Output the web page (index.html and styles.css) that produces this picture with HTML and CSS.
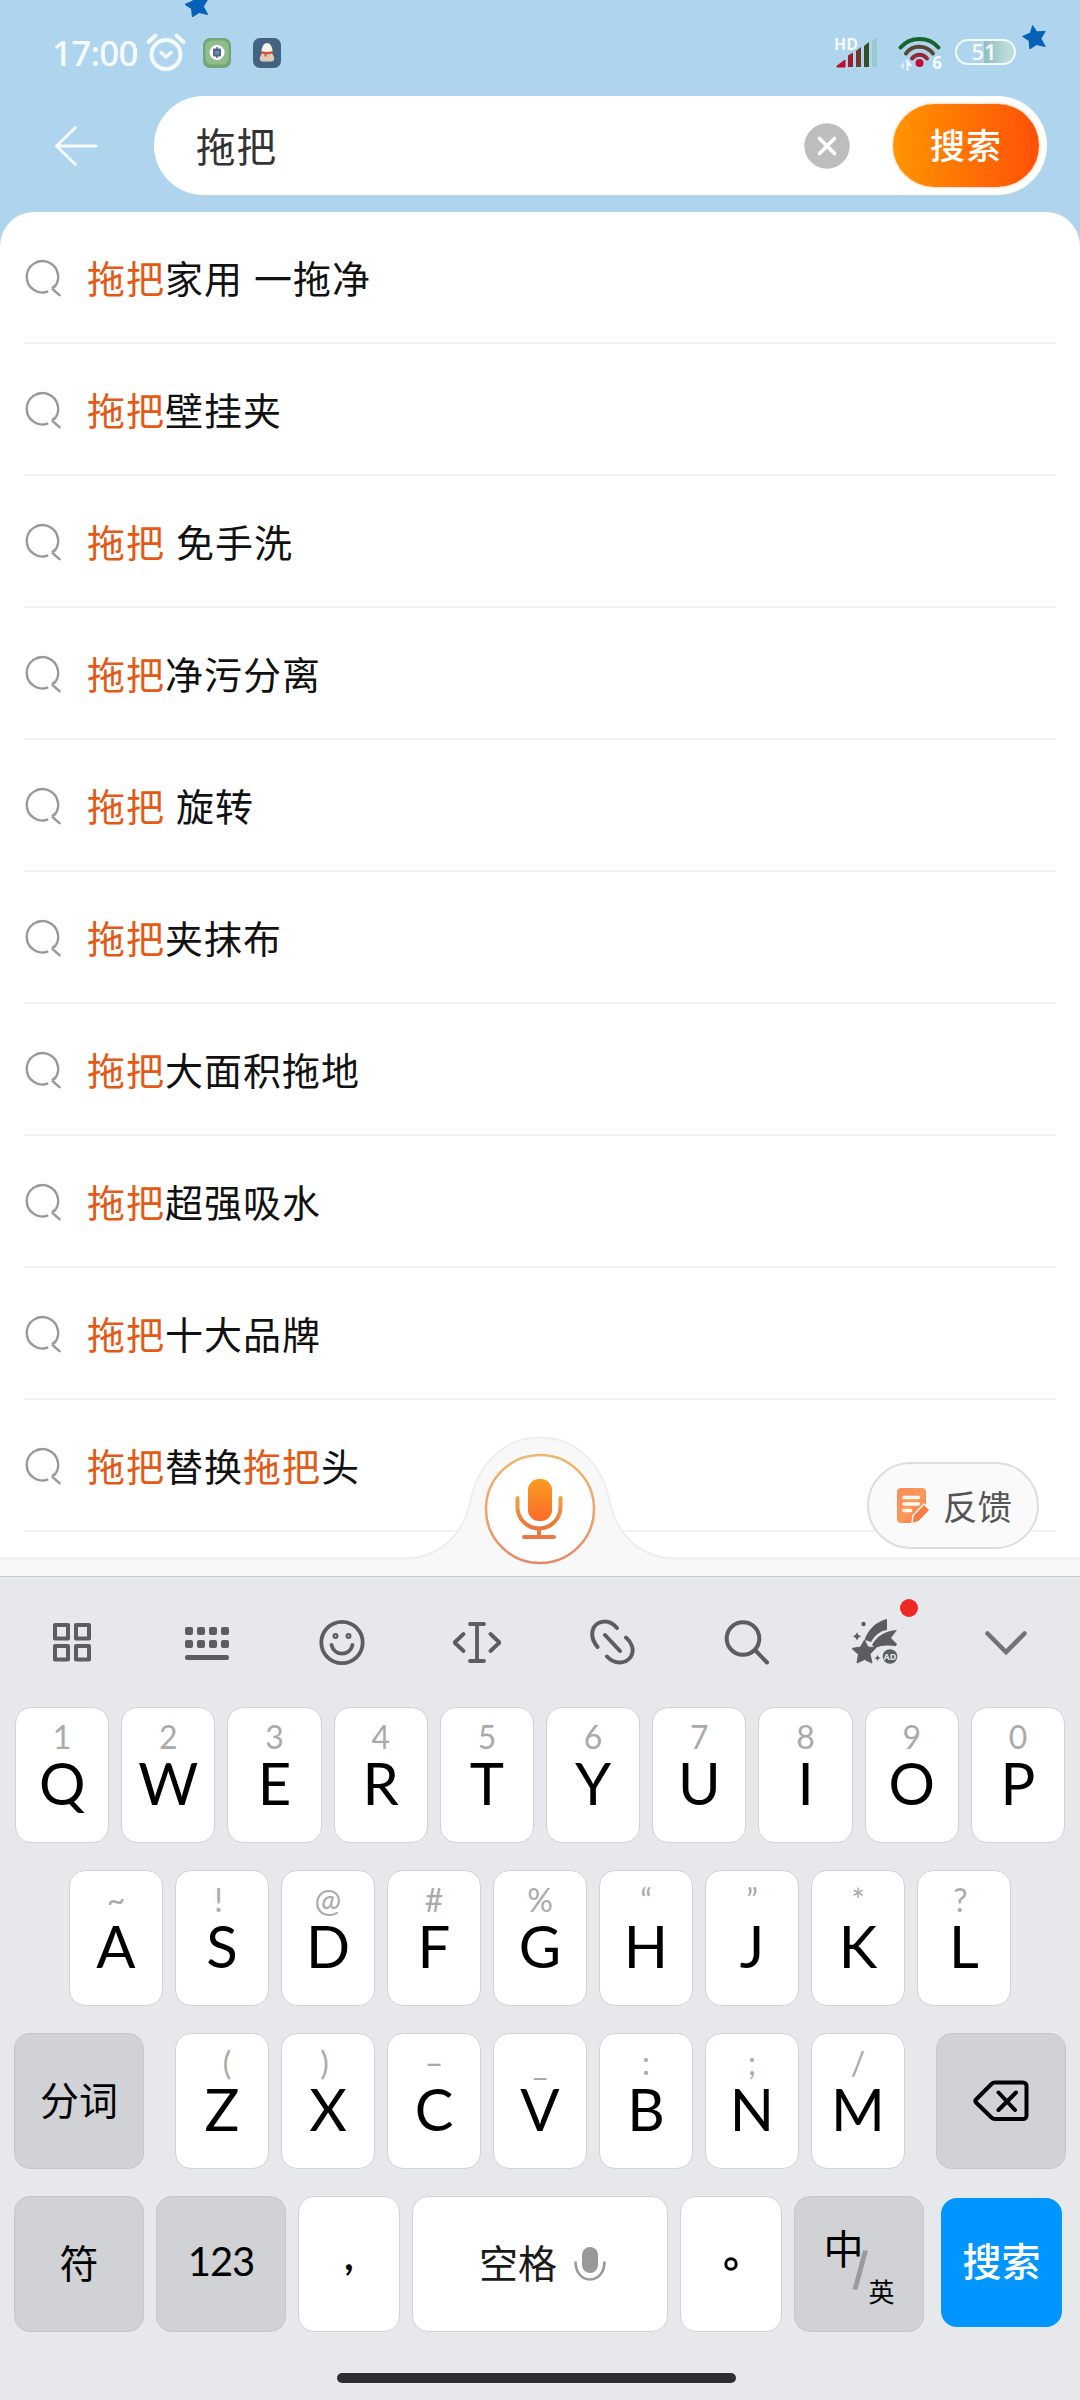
FILE: index.html
```html
<!DOCTYPE html>
<html lang="zh-CN">
<head>
<meta charset="UTF-8">
<title>搜索</title>
<link rel="stylesheet" href="styles.css">
</head>
<body>
<svg class="defs" width="0" height="0">
  <defs>
    <linearGradient id="warm" x1="0" y1="0" x2="0" y2="1"><stop offset="0" stop-color="#f0a040"/><stop offset="1" stop-color="#ea743c"/></linearGradient>
    <linearGradient id="micBody" x1="0" y1="0" x2="0" y2="1"><stop offset="0" stop-color="#fb9c22"/><stop offset="1" stop-color="#fb6a28"/></linearGradient>
    <linearGradient id="ring" x1="0" y1="0" x2="0" y2="1"><stop offset="0" stop-color="#ecb870"/><stop offset="0.5" stop-color="#f2a268"/><stop offset="1" stop-color="#e08c6c"/></linearGradient>
    <linearGradient id="note" x1="0" y1="0" x2="1" y2="1"><stop offset="0" stop-color="#fa8a58"/><stop offset="0.5" stop-color="#fb9a5a"/><stop offset="1" stop-color="#fb7440"/></linearGradient>
    <symbol id="lens" viewBox="0 0 38 38"><path d="M24.2 32.400A15.700 15.700 0 1 1 30 28.400M28 29.500l8.300 7.400M28 29.500l2.800-3" fill="none" stroke="#999" stroke-width="2.400"/></symbol>
    <symbol id="star" viewBox="0 0 24 24"><path d="M10.6.6l4.2 6.3 8.4-.6-4.3 7.2 4.3 8-8.6-2-6.7 4.4-.8-8.2L.6 11.4l7.8-3.4z" fill="#0560b8" stroke="#0560b8" stroke-width="1" stroke-linejoin="round"/></symbol>
  </defs>
</svg>
<div class="phone">
  <header class="top">
    <svg class="star-a" width="25" height="24"><use href="#star"/></svg>
    <svg class="star-b" width="24" height="24"><use href="#star"/></svg>
    <div class="status">
      <span class="time">17:00</span>
      <svg class="alarm" width="42" height="40" viewBox="0 0 42 40" fill="none" stroke="#f4fbff" stroke-linecap="round"><circle cx="21" cy="22.500" r="14.500" stroke-width="4"/><path d="M3.500 10l7-6.500M31.500 3.500l7 6.500" stroke-width="4"/><path d="M16 20.500l5 4.500 5-4.500" stroke-width="3.500"/></svg>
      <svg class="app-a" width="28" height="30" viewBox="0 0 28 30"><rect width="28" height="30" rx="7" fill="#72a578"/><rect x="2.500" y="2.500" width="23" height="24" rx="6" fill="#91bd8c"/><circle cx="14" cy="14.500" r="7.500" fill="#fff"/><rect x="10" y="10.500" width="8" height="8" rx="1" fill="#59667c"/><path d="M14 9v11" stroke="#59667c" stroke-width="1.500"/><rect x="12" y="13" width="4" height="3.500" fill="#5a8fd8"/></svg>
      <svg class="app-b" width="28" height="30" viewBox="0 0 28 30"><rect width="28" height="30" rx="7" fill="#426482"/><path d="M9 23.500c-1.500-.5-3-2-2-4.500l2-4h10l2 4c1 2.500-.5 4-2 4.500z" fill="#dccdb2"/><path d="M8.500 15c-.5-5 2-10 5.500-10s6 5 5.500 10z" fill="#f8f5ea"/><path d="M8 14c4 1.500 8 1.500 12 0M12.500 15v3.500" stroke="#dc4c38" stroke-width="2" fill="none"/></svg>
      <div class="signals">
        <div class="cell"><span class="hd">HD</span>
          <svg width="43" height="32" viewBox="0 0 43 32"><path d="M1 29l8-6v7H1z" fill="#c40d2b" stroke="#c40d2b" stroke-linejoin="round"/><path d="M12 18.500l5-3V30h-5z" fill="#a11c2c"/><path d="M20 14l5-4v20h-5z" fill="#6b3a2a"/><path d="M28 9l5-4v25h-5z" fill="#324f27"/><path d="M36 4l5-4v30h-5z" fill="#9cc8d2"/></svg>
        </div>
        <div class="wifi">
          <svg width="46" height="36" viewBox="0 0 46 36" fill="none" stroke-width="4" stroke-linecap="round"><path d="M3.500 11.500C13 0 32 0 41.500 11.500" stroke="#186332"/><path d="M9 17.500c6-9 20-9 27 0" stroke="#5b4630"/><path d="M15 22.500c4-5 11-5 15 0" stroke="#922a35"/><circle cx="22.500" cy="27" r="4" fill="#c50d32" stroke="none"/><path d="M3 30l4-4v8z" fill="#d4eafa"/><path d="M10.500 34V25l3 4h-3" stroke="#eef8ff" stroke-width="2"/></svg>
          <span class="gen">6</span>
        </div>
        <div class="battery"><span>51</span></div>
      </div>
    </div>
    <div class="search-row">
      <svg class="back" width="44" height="44" viewBox="0 0 44 44" fill="none" stroke="#f6fbff" stroke-width="3" stroke-linecap="round" stroke-linejoin="round"><path d="M21.500 3.500L2.500 22l19 18.500M3 22h39"/></svg>
      <div class="field">
        <span class="query">拖把</span>
        <svg class="clear" width="46" height="46" viewBox="0 0 46 46"><circle cx="23" cy="23" r="22.700" fill="#bdbdbd"/><path d="M15.500 15.500l15 15m0-15l-15 15" stroke="#fff" stroke-width="3.800" stroke-linecap="round"/></svg>
        <div class="go">搜索</div>
      </div>
    </div>
  </header>
  <main class="panel">
    <ul class="list">
      <li><svg><use href="#lens"/></svg><span><em>拖把</em>家用 一拖净</span></li>
      <li><svg><use href="#lens"/></svg><span><em>拖把</em>壁挂夹</span></li>
      <li><svg><use href="#lens"/></svg><span><em>拖把</em> 免手洗</span></li>
      <li><svg><use href="#lens"/></svg><span><em>拖把</em>净污分离</span></li>
      <li><svg><use href="#lens"/></svg><span><em>拖把</em> 旋转</span></li>
      <li><svg><use href="#lens"/></svg><span><em>拖把</em>夹抹布</span></li>
      <li><svg><use href="#lens"/></svg><span><em>拖把</em>大面积拖地</span></li>
      <li><svg><use href="#lens"/></svg><span><em>拖把</em>超强吸水</span></li>
      <li><svg><use href="#lens"/></svg><span><em>拖把</em>十大品牌</span></li>
      <li><svg><use href="#lens"/></svg><span><em>拖把</em>替换<em>拖把</em>头</span></li>
    </ul>
    <svg class="voice" width="1080" height="142" viewBox="0 0 1080 142">
      <path d="M-2 124.500H405C430 124 446 112 455 101C465 88 467 80 470 69C472 59 473 55 477 46C487 24 508 3.500 540 3.500C572 3.500 593 24 603 46C607 55 608 59 610 69C613 80 615 88 625 101C634 112 650 124 675 124.500H1082V144H-2z" fill="#f8f8f8" stroke="#eee" stroke-width="2"/>
      <circle cx="540" cy="75" r="54" fill="#fff" stroke="url(#ring)" stroke-width="2.500"/>
      <rect x="528" y="45" width="24" height="42" rx="11" fill="url(#micBody)"/>
      <path d="M517.500 64v9a21.500 21.500 0 0 0 43 0v-9" fill="none" stroke="url(#warm)" stroke-width="4" stroke-linecap="round"/>
      <path d="M539 94v9" stroke="#ea7a3c" stroke-width="4"/><path d="M524 103h30" stroke="#ea7a45" stroke-width="4" stroke-linecap="round"/>
    </svg>
    <div class="feedback">
      <svg width="34" height="38" viewBox="0 0 34 38"><path d="M5 1h21a4 4 0 0 1 4 4v14L15 36H5a4 4 0 0 1-4-4V5a4 4 0 0 1 4-4z" fill="url(#note)"/><path d="M8 10.500h14.500M8 17h14.500M8 23.500h6.500" stroke="#fff8f4" stroke-width="3.600" stroke-linecap="round"/><path d="M16 37l1-8.500L28 17l6 6-11 11.500z" fill="#fb7a45" stroke="#fafafa" stroke-width="1.500"/></svg>
      <span>反馈</span>
    </div>
  </main>
  <section class="keyboard">
    <div class="tools">
      <svg viewBox="0 0 48 48" fill="none" stroke="#5b5d61" stroke-width="4" stroke-linejoin="round"><rect x="7" y="7" width="13" height="13.500"/><rect x="28" y="7" width="13" height="13.500"/><rect x="7" y="28" width="13" height="13.500"/><rect x="28" y="28" width="13" height="13.500"/></svg>
      <svg viewBox="0 0 48 48" fill="#5b5d61"><rect x="2" y="9" width="8" height="8" rx="2"/><rect x="14" y="9" width="8" height="8" rx="2"/><rect x="26" y="9" width="8" height="8" rx="2"/><rect x="38" y="9" width="8" height="8" rx="2"/><rect x="2" y="22" width="8" height="8" rx="2"/><rect x="14" y="22" width="8" height="8" rx="2"/><rect x="26" y="22" width="8" height="8" rx="2"/><rect x="38" y="22" width="8" height="8" rx="2"/><rect x="2" y="37" width="44" height="5" rx="2"/></svg>
      <svg viewBox="0 0 48 48" fill="none" stroke="#5b5d61" stroke-width="3.800" stroke-linecap="round"><circle cx="24" cy="24.500" r="20.700"/><path d="M13.500 27c3 11.500 18 11.500 21 0"/><circle cx="17.500" cy="18" r="1.100"/><circle cx="30.500" cy="18" r="1.100"/></svg>
      <svg viewBox="0 0 48 48" fill="none" stroke="#5b5d61" stroke-width="3.800" stroke-linecap="round" stroke-linejoin="round"><path d="M17 6h14M17 43h14M24 6v37M10.500 16l-9 8.500 9 8.500M37.500 16l9 8.500-9 8.500"/></svg>
      <svg viewBox="0 0 48 48" fill="none" stroke="#5b5d61" stroke-width="4" stroke-linecap="round"><path d="M29 10C21.500 1 10 2 5.500 10C2 18 5.500 24 9.500 29M19 38.500C27 47 38 46 43 38.500C47 31 43 24 38 19.500M17 17L32 33"/></svg>
      <svg viewBox="0 0 48 48" fill="none" stroke="#5b5d61" stroke-width="4" stroke-linecap="round"><circle cx="20" cy="20.500" r="16.300"/><path d="M32.500 32.500l11.500 12"/></svg>
      <svg class="meteor" viewBox="0 0 48 48" fill="#5b5d61"><path d="M13.500 22C17 12 24 4 36 1v11c-7 1-12 5-16 12l-3-1z"/><path d="M21 27c5-9 13-14 25-15l-6 8 6 6-1 2c-8-1-15-1-21 2z"/><path d="M13.500 22l3.500 7 8 .7-6 6.300 2 9-7.500-3.500L6 45l1.500-8.500-6.500-6 8.500-1.500z" stroke="#5b5d61" stroke-linejoin="round"/><circle cx="12.500" cy="6" r="2.200"/><path d="M6 14q1 4 4.500 4-3.500 1-4.500 4.500Q5 19 1.500 18 5 18 6 14zM26.500 37q.5 2.500 3 3-2.500.5-3 3-.5-2.500-3-3 2.500-.5 3-3z"/><circle cx="39" cy="38.500" r="7.300"/><text class="ad" x="39" y="41.500" text-anchor="middle">AD</text></svg>
      <svg class="fold" viewBox="0 0 48 48" fill="none" stroke="#727377" stroke-width="4.500" stroke-linecap="round"><path d="M5.500 15.500L24 34l18.500-18.500"/></svg>
      <i class="dot"></i>
    </div>
    <div class="row r1">
      <div class="key"><small>1</small><b>Q</b></div><div class="key"><small>2</small><b>W</b></div><div class="key"><small>3</small><b>E</b></div><div class="key"><small>4</small><b>R</b></div><div class="key"><small>5</small><b>T</b></div><div class="key"><small>6</small><b>Y</b></div><div class="key"><small>7</small><b>U</b></div><div class="key"><small>8</small><b>I</b></div><div class="key"><small>9</small><b>O</b></div><div class="key"><small>0</small><b>P</b></div>
    </div>
    <div class="row r2">
      <div class="key"><small>~</small><b>A</b></div><div class="key"><small class="pull">!</small><b>S</b></div><div class="key"><small>@</small><b>D</b></div><div class="key"><small>#</small><b>F</b></div><div class="key"><small>%</small><b>G</b></div><div class="key"><small>“</small><b>H</b></div><div class="key"><small>”</small><b>J</b></div><div class="key"><small>*</small><b>K</b></div><div class="key"><small class="pull">?</small><b>L</b></div>
    </div>
    <div class="row r3">
      <div class="key alt wide">分词</div>
      <div class="letters"><div class="key"><small class="push">(</small><b>Z</b></div><div class="key"><small class="pull">)</small><b>X</b></div><div class="key"><small>–</small><b>C</b></div><div class="key"><small>_</small><b>V</b></div><div class="key"><small>:</small><b>B</b></div><div class="key"><small>;</small><b>N</b></div><div class="key"><small>/</small><b>M</b></div></div>
      <div class="key alt wide del"><svg width="56" height="42" viewBox="0 0 56 42" fill="none" stroke="#000" stroke-width="4" stroke-linecap="round" stroke-linejoin="round"><path d="M22 2.500H50a3.500 3.500 0 0 1 3.500 3.500V35.500a3.500 3.500 0 0 1-3.500 3.500H22q-2 0-3.500-1.500L3 22.500q-1.500-1.500 0-3L18.500 4Q20 2.500 22 2.500zM25.500 12.500L42 30M43 12.500L25.500 30"/></svg></div>
    </div>
    <div class="row r4">
      <div class="key alt wide">符</div>
      <div class="key alt wide num">123</div>
      <div class="key punct comma">,</div>
      <div class="key space"><span>空格</span><svg width="32" height="36" viewBox="0 0 32 36"><rect x="8" y="1" width="16" height="26" rx="8" fill="#999"/><path d="M1.500 15.500c0 24 29 24 29 0" fill="none" stroke="#999" stroke-width="2.600"/></svg></div>
      <div class="key punct"><svg width="14" height="14" viewBox="0 0 14 14"><circle cx="7" cy="7" r="5.200" fill="none" stroke="#000" stroke-width="3"/></svg></div>
      <div class="key alt wide lang"><span class="zh">中</span><svg width="16" height="40" viewBox="0 0 16 40"><path d="M11 .5h5L5.500 39.500H.5z" fill="#9b9b9f"/></svg><span class="en">英</span></div>
      <div class="key enter">搜索</div>
    </div>
    <div class="home"></div>
  </section>
</div>
</body>
</html>
```
FILE: styles.css
```css
* { box-sizing: border-box; }
body { margin: 0; font-family: "Noto Sans CJK SC", sans-serif; }
.defs { display: block; }
.phone { width: 1080px; height: 2400px; display: flex; flex-direction: column; overflow: hidden; background: #aed5ed; position: relative; }

.top { height: 212px; }
.star-a { position: absolute; left: 184px; top: -7px; }
.star-b { position: absolute; left: 1022px; top: 25px; }
.status { height: 96px; padding: 32px 64px 0 52px; display: flex; align-items: flex-start; }
.time { width: 92px; font: 500 35px/41px "Noto Sans", sans-serif; color: #f6fcff; letter-spacing: -0.800px; }
.alarm { margin: 0 0 0 0.5px; }
.app-a { margin: 6px 0 0 16px; }
.app-b { margin: 6px 0 0 22px; }
.signals { margin-left: auto; display: flex; }
.cell { width: 43px; height: 32px; margin: 5px 0 0; position: relative; }
.hd { position: absolute; left: -2px; top: -1px; font: 700 16px/16px "Open Sans", sans-serif; color: #f4fbff; }
.wifi { width: 46px; height: 36px; margin: 4px 0 0 18px; position: relative; }
.gen { position: absolute; right: 1px; bottom: 1px; font: 700 17px/17px "Open Sans", sans-serif; color: #f4fbff; }
.battery { width: 61px; height: 26px; margin: 7px 0 0 12px; border: 2.500px solid #f4fbff; border-radius: 13px; background: linear-gradient(90deg, transparent 47%, #8fbfc0 47%, #bcdcdc 90%); display: flex; justify-content: center; padding-right: 3px; font: 600 22px/20px "Open Sans", sans-serif; color: #f8fdff; }

.search-row { display: flex; align-items: center; height: 99px; padding-left: 54px; }
.field { width: 893px; height: 99px; margin-left: 56px; padding: 0 8px 0 42px; border-radius: 50px; background: #fff; display: flex; align-items: center; }
.query { font-size: 39.500px; line-height: 56px; letter-spacing: 1px; padding-bottom: 2px; color: #333; }
.clear { margin-left: auto; }
.go { width: 146px; height: 83px; margin-left: 43px; border-radius: 42px; background: linear-gradient(90deg, #ff9500, #ff5008); box-shadow: 0 0 3px #ffb080; color: #fff; font-size: 35px; letter-spacing: 1px; font-weight: 500; line-height: 80px; text-align: center; }

.panel { height: 1364px; background: #fff; border-radius: 34px 34px 0 0; position: relative; }
.list { list-style: none; margin: 0; padding: 0 24px; }
.list li { height: 132px; border-bottom: 2px solid #f2f2f2; display: flex; align-items: center; font-size: 38px; letter-spacing: 1px; line-height: 56px; word-spacing: 1.500px; color: #111; }
.list svg { width: 38px; height: 38px; margin: 1px 25px 0 0; }
.list em { font-style: normal; color: #e35a17; }
.voice { position: absolute; left: 0; bottom: 0; }
.feedback { position: absolute; left: 867px; top: 1250px; width: 172px; height: 87px; border: 2.500px solid #ddd; border-radius: 44px; background: #fafafa; display: flex; align-items: center; padding-left: 27px; gap: 13px; font-size: 34.500px; line-height: 50px; color: #555; }
.feedback span { padding-bottom: 1px; }

.keyboard { height: 824px; background: #e7e8ec; border-top: 1px solid #c9c9cf; }
.tools { height: 130px; padding: 41px 0 0 48px; display: flex; gap: 87px; position: relative; }
.tools svg { width: 48px; height: 48px; flex: none; }
.tools .meteor { margin-left: -7px; }
.tools .fold { margin-left: -4px; }
.ad { font: 700 9px "Open Sans", sans-serif; fill: #e7e8ec; }
.dot { position: absolute; left: 900px; top: 22px; width: 18px; height: 18px; border-radius: 50%; background: #ee2824; }
.row { display: flex; height: 136px; margin-bottom: 27px; gap: 12px; }
.r1 { padding: 0 15px; }
.r2 { padding: 0 69px; }
.r3 { padding: 0 14px; justify-content: space-between; }
.r4 { padding: 0 18px 0 14px; }
.key { flex: 1 1 94px; display: flex; flex-direction: column; align-items: center; padding-top: 13px; background: #fff; border: 1px solid #d2d2d6; border-radius: 16px; color: #000; }
.key small { font: 32px/32px Lato, sans-serif; color: #aaa; }
.key b { margin-top: 1px; font: 58px/58px Lato, sans-serif; }
.key .pull { padding-right: 7px; }
.key .push { padding-left: 10px; }
.letters { width: 730px; display: flex; gap: 12px; }
.wide, .punct, .space, .enter { flex-direction: row; justify-content: center; padding: 0 0 6px; font-size: 39px; }
.wide { flex: 0 0 130px; }
.alt { background: #d1d2d6; border-color: #c5c6ca; }
.del { padding: 0; }
.num { font-family: Lato, sans-serif; font-size: 40px; letter-spacing: -1px; }
.punct { flex: 0 0 102px; padding-bottom: 0; }
.comma { font: 700 40px/40px Lato, sans-serif; padding-bottom: 19px; }
.space { flex: 0 0 256px; gap: 17px; padding-left: 5px; }
.space span { color: #1a1a1a; }
.space svg { margin-top: 6px; }
.lang { align-items: flex-start; padding: 0 5px 0 0; }
.zh { font-size: 40px; line-height: 60px; margin: 20px -17px 0 5px; }
.lang svg { margin: 53px 0 0 6px; }
.en { font-size: 26px; line-height: 38px; margin-top: 75px; }
.enter { flex: 0 0 121px; height: 129px; margin: 2px 0 0 5px; border: 0; background: #0095ff; color: #fff; font-weight: 500; padding-bottom: 8px; }
.home { width: 399px; height: 10px; margin: 41px 0 0 337px; border-radius: 5px; background: #2d2e32; }
```
